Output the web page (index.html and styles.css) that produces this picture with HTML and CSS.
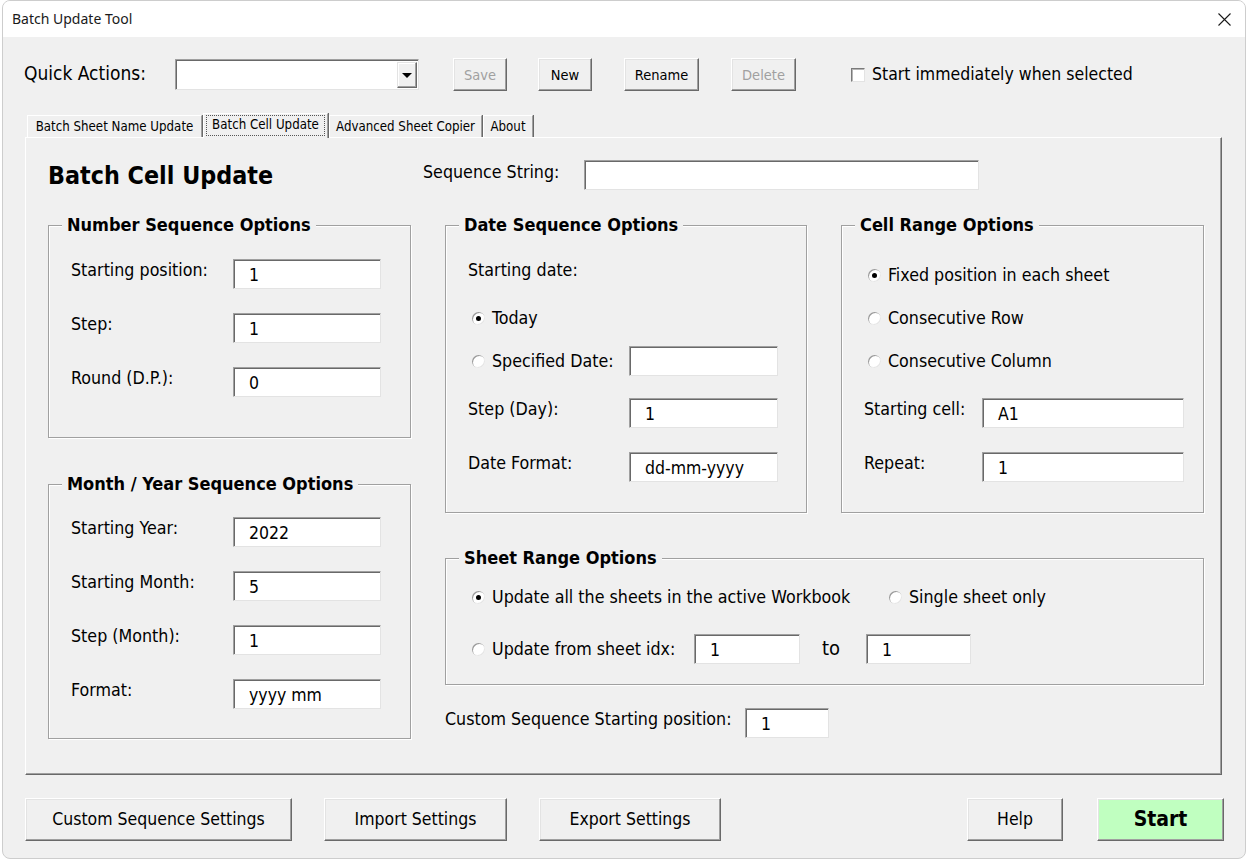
FILE: index.html
```html
<!DOCTYPE html>
<html>
<head>
<meta charset="utf-8">
<title>Batch Update Tool</title>
<link rel="stylesheet" href="styles.css">
</head>
<body>
<div class="window">
  <div class="titlebar">
    <span class="title">Batch Update Tool</span>
    <svg class="close" width="13" height="13" viewBox="0 0 13 13"><path d="M0.5 0.5 L12.5 12.5 M12.5 0.5 L0.5 12.5" stroke="#1a1a1a" stroke-width="1.1" fill="none"/></svg>
  </div>
  <div class="client">
    <div class="quick">
      <span class="qa-label">Quick Actions:</span>
      <div class="combo"><div class="combo-field"></div><div class="combo-btn"><span class="tri"></span></div></div>
      <div class="btn btn-save disabled">Save</div>
      <div class="btn btn-new">New</div>
      <div class="btn btn-rename">Rename</div>
      <div class="btn btn-delete disabled">Delete</div>
      <div class="check-wrap"><span class="checkbox"></span><span class="check-text">Start immediately when selected</span></div>
    </div>

    <div class="tabs">
      <div class="tab tab-1">Batch Sheet Name Update</div>
      <div class="tab tab-2 active"><span class="focus">Batch Cell Update</span></div>
      <div class="tab tab-3">Advanced Sheet Copier</div>
      <div class="tab tab-4">About</div>
    </div>

    <div class="panel">
      <div class="header">
        <h1 class="heading">Batch Cell Update</h1>
        <span class="lbl seq-lbl">Sequence String:</span>
        <div class="field seq-field"></div>
      </div>

      <div class="content">
        <div class="left-col">
          <div class="frame frame-number">
            <span class="legend">Number Sequence Options</span>
            <div class="rows rows-number">
              <div class="row"><span class="lbl w-left">Starting position:</span><div class="field f-left">1</div></div>
              <div class="row"><span class="lbl w-left">Step:</span><div class="field f-left">1</div></div>
              <div class="row"><span class="lbl w-left">Round (D.P.):</span><div class="field f-left">0</div></div>
            </div>
          </div>
          <div class="frame frame-month">
            <span class="legend">Month / Year Sequence Options</span>
            <div class="rows rows-month">
              <div class="row"><span class="lbl w-left">Starting Year:</span><div class="field f-left">2022</div></div>
              <div class="row"><span class="lbl w-left">Starting Month:</span><div class="field f-left">5</div></div>
              <div class="row"><span class="lbl w-left">Step (Month):</span><div class="field f-left">1</div></div>
              <div class="row"><span class="lbl w-left">Format:</span><div class="field f-left">yyyy mm</div></div>
            </div>
          </div>
        </div>

        <div class="right-col">
          <div class="pair">
            <div class="frame frame-date">
              <span class="legend">Date Sequence Options</span>
              <div class="row d1"><span class="lbl">Starting date:</span></div>
              <div class="row radio-row d2"><span class="radio checked"></span><span class="rtext">Today</span></div>
              <div class="row radio-row d3"><span class="radio"></span><span class="rtext w-spec">Specified Date:</span><div class="field f-date"></div></div>
              <div class="row d4"><span class="lbl w-date">Step (Day):</span><div class="field f-date">1</div></div>
              <div class="row d5"><span class="lbl w-date">Date Format:</span><div class="field f-date">dd-mm-yyyy</div></div>
            </div>
            <div class="frame frame-cell">
              <span class="legend">Cell Range Options</span>
              <div class="row radio-row c1"><span class="radio checked"></span><span class="rtext">Fixed position in each sheet</span></div>
              <div class="row radio-row c2"><span class="radio"></span><span class="rtext">Consecutive Row</span></div>
              <div class="row radio-row c3"><span class="radio"></span><span class="rtext">Consecutive Column</span></div>
              <div class="row c4"><span class="lbl w-cell">Starting cell:</span><div class="field f-cell">A1</div></div>
              <div class="row c5"><span class="lbl w-cell">Repeat:</span><div class="field f-cell">1</div></div>
            </div>
          </div>

          <div class="frame frame-sheet">
            <span class="legend">Sheet Range Options</span>
            <div class="row radio-row s1">
              <div class="ropt w-all"><span class="radio checked"></span><span class="rtext">Update all the sheets in the active Workbook</span></div>
              <div class="ropt"><span class="radio"></span><span class="rtext">Single sheet only</span></div>
            </div>
            <div class="row radio-row s2">
              <div class="ropt w-from"><span class="radio"></span><span class="rtext">Update from sheet idx:</span></div>
              <div class="field f-idx">1</div>
              <span class="to">to</span>
              <div class="field f-idx2">1</div>
            </div>
          </div>

          <div class="row custom-row">
            <span class="lbl w-custom">Custom Sequence Starting position:</span>
            <div class="field f-custom">1</div>
          </div>
        </div>
      </div>
    </div>

    <div class="bottom">
      <div class="btn big b-custom">Custom Sequence Settings</div>
      <div class="btn big b-import">Import Settings</div>
      <div class="btn big b-export">Export Settings</div>
      <div class="btn big b-help">Help</div>
      <div class="btn big b-start">Start</div>
    </div>
  </div>
</div>
</body>
</html>
```

FILE: styles.css
```css
* { box-sizing: border-box; }
html, body { margin: 0; padding: 0; background: #ffffff; }
body {
  font-family: "DejaVu Sans Condensed", "DejaVu Sans", sans-serif;
  color: #000;
  width: 1248px;
  height: 860px;
  overflow: hidden;
}
.window {
  margin: 0 2px;
  width: 1244px;
  height: 859px;
  border: 1px solid #cdcdcd;
  border-radius: 8px;
  overflow: hidden;
  display: flex;
  flex-direction: column;
  background: #f0f0f0;
}
.titlebar {
  height: 36px;
  flex: none;
  background: #ffffff;
  display: flex;
  align-items: center;
  justify-content: space-between;
  padding: 0 14px 0 9px;
}
.title {
  font-family: "Noto Sans", "Open Sans", sans-serif;
  font-size: 14px;
  color: #1a1a1a;
  padding-bottom: 1px;
}
.close { display: block; margin-top: 0; }
.client {
  flex: 1;
  padding: 21px 0 0 0;
  display: flex;
  flex-direction: column;
}

/* quick actions */
.quick {
  display: flex;
  align-items: center;
  height: 33px;
  padding-left: 21px;
}
.qa-label {
  width: 151px;
  font-size: 19px;
  line-height: 22px;
  padding-bottom: 4px;
}
.combo {
  width: 244px;
  height: 31px;
  display: flex;
  background: #fff;
  border: 1px solid;
  border-color: #a0a0a0 #e3e3e3 #e3e3e3 #a0a0a0;
  box-shadow: inset 1px 1px 0 #696969;
  padding: 2px 1px 1px 2px;
}
.combo-field { flex: 1; }
.combo-btn {
  width: 20px;
  height: 26px;
  background: #f0f0f0;
  border: 1px solid;
  border-color: #e3e3e3 #696969 #696969 #e3e3e3;
  box-shadow: inset -1px -1px 0 #a0a0a0, inset 1px 1px 0 #fff;
  display: flex;
  align-items: center;
  justify-content: center;
}
.tri {
  width: 0; height: 0;
  border-left: 5px solid transparent;
  border-right: 5px solid transparent;
  border-top: 5px solid #000;
  margin-top: 1px;
}
.btn {
  display: flex;
  align-items: center;
  justify-content: center;
  background: #f0f0f0;
  border: 1px solid;
  border-color: #ffffff #696969 #696969 #ffffff;
  box-shadow: inset -1px -1px 0 #a0a0a0, inset 1px 1px 0 #e3e3e3;
  font-size: 14.5px;
  color: #000;
  height: 33px;
  flex: none;
}
.btn.disabled { color: #a0a0a0; }
.btn-save { width: 54px; margin-left: 34px; }
.btn-new { width: 54px; margin-left: 31px; }
.btn-rename { width: 75px; margin-left: 32px; }
.btn-delete { width: 65px; margin-left: 32px; }
.check-wrap { display: flex; align-items: center; margin-left: 55px; }
.checkbox {
  width: 14px; height: 14px;
  background: #fff;
  border: 1px solid;
  border-color: #7a7a7a #e3e3e3 #e3e3e3 #7a7a7a;
  box-shadow: inset 1px 1px 0 #b5b5b5;
  margin-right: 7px;
}
.check-text { font-size: 17.5px; line-height: 20px; padding-bottom: 1px; }

/* tabs */
.tabs {
  display: flex;
  align-items: flex-end;
  height: 24px;
  margin: 22px 0 0 24px;
  position: relative;
  z-index: 2;
}
.tab {
  height: 22px;
  font-size: 13.2px;
  line-height: 20px;
  text-align: center;
  border-top: 1px solid #ffffff;
  border-left: 1px solid #ffffff;
  border-right: 1px solid #a0a0a0;
  box-shadow: 1px 0 0 #696969;
  background: #f0f0f0;
  padding-top: 1px;
  margin-right: 1px;
}
.tab-1 { width: 175px; }
.tab-2 { width: 125px; }
.tab-3 { width: 153px; }
.tab-4 { width: 50px; }
.tab.active {
  height: 25px;
  margin-bottom: -1px;
  padding: 1px 2px 0;
}
.focus {
  display: block;
  border: 1px dotted #555;
  line-height: 18px;
  padding-bottom: 1px;
}

/* panel */
.panel {
  margin: 0 23px 0 22px;
  height: 638px;
  border-top: 1px solid #ffffff;
  border-left: 1px solid #ffffff;
  border-right: 1px solid #696969;
  border-bottom: 1px solid #696969;
  box-shadow: inset -1px -1px 0 #a0a0a0;
  padding: 22px 0 0 22px;
}
.header {
  display: flex;
  align-items: flex-start;
  height: 30px;
  margin-bottom: 35px;
}
.heading {
  margin: 0;
  width: 375px;
  font-size: 24.8px;
  font-weight: bold;
  line-height: 30px;
  padding-top: 1px;
}
.lbl {
  font-size: 17.7px;
  line-height: 20px;
  padding-top: 1px;
  flex: none;
}
.seq-lbl { width: 161px; padding-top: 2px; }
.field {
  height: 30px;
  background: #fff;
  border: 1px solid;
  border-color: #a0a0a0 #e3e3e3 #e3e3e3 #a0a0a0;
  box-shadow: inset 1px 1px 0 #696969;
  font-size: 17.5px;
  line-height: 20px;
  padding: 5px 0 0 15px;
  flex: none;
}
.seq-field { width: 395px; }

.content {
  display: grid;
  grid-template-columns: 363px 759px;
  column-gap: 34px;
  align-items: start;
}
.left-col { display: flex; flex-direction: column; gap: 46px; }
.right-col { display: flex; flex-direction: column; }
.pair {
  display: grid;
  grid-template-columns: 362px 363px;
  column-gap: 34px;
}
.frame {
  border: 1px solid #a0a0a0;
  box-shadow: inset 1px 1px 0 #ffffff, 1px 1px 0 #ffffff;
  display: flex;
  flex-direction: column;
  padding: 0 22px;
}
.legend {
  align-self: flex-start;
  margin: -11px 0 0 -9px;
  padding: 0 5px;
  background: #f0f0f0;
  font-size: 18px;
  font-weight: bold;
  line-height: 20px;
  height: 20px;
}
.frame-number { height: 213px; }
.frame-month { height: 255px; }
.frame-date { height: 288px; }
.frame-cell { height: 288px; }
.frame-sheet { height: 127px; margin-top: 45px; }

.rows { display: flex; flex-direction: column; gap: 24px; }
.rows-number { margin-top: 24px; }
.rows-month { margin-top: 23px; }

.row { display: flex; align-items: flex-start; height: 30px; flex: none; }
.radio-row { align-items: center; }
.w-left { width: 162px; }
.f-left { width: 148px; }

.d1 { margin-top: 24px; }
.d2 { margin-top: 14px; }
.d3 { margin-top: 13px; }
.d4 { margin-top: 22px; }
.d5 { margin-top: 24px; }
.w-date { width: 161px; }
.w-spec { width: 137px; }
.f-date { width: 149px; }

.c1 { margin-top: 25px; }
.c2 { margin-top: 13px; }
.c3 { margin-top: 13px; }
.c4 { margin-top: 22px; }
.c5 { margin-top: 24px; }
.w-cell { width: 118px; }
.f-cell { width: 202px; }

.radio {
  width: 13px; height: 13px;
  border-radius: 50%;
  background: #ffffff;
  box-shadow: inset 1px 1px 0 #9a9a9a, inset -1px -1px 0 #e6e6e6;
  margin: 0 7px 0 4px;
  flex: none;
  display: flex;
  align-items: center;
  justify-content: center;
}
.radio.checked::after {
  content: "";
  width: 5px; height: 5px;
  border-radius: 50%;
  background: #000;
}
.rtext { font-size: 17.7px; line-height: 20px; padding-bottom: 1px; flex: none; }

.s1 { margin-top: 14px; }
.s2 { margin-top: 22px; }
.ropt { display: flex; align-items: center; flex: none; }
.w-all { width: 417px; }
.w-from { width: 226px; }
.f-idx { width: 106px; }
.to { width: 44px; margin-left: 22px; font-size: 20px; line-height: 24px; padding-bottom: 3px; }
.f-idx2 { width: 105px; }

.custom-row { margin-top: 23px; }
.w-custom { width: 300px; }
.f-custom { width: 84px; }

/* bottom */
.bottom {
  display: flex;
  margin: 23px 0 0 22px;
}
.btn.big { height: 43px; font-size: 17.5px; padding-bottom: 1px; }
.b-custom { width: 267px; }
.b-import { width: 183px; margin-left: 32px; }
.b-export { width: 182px; margin-left: 32px; }
.b-help { width: 96px; margin-left: 246px; }
.b-start { width: 127px; margin-left: 34px; background: #c0ffc0; font-weight: bold; font-size: 21px !important; }
```
